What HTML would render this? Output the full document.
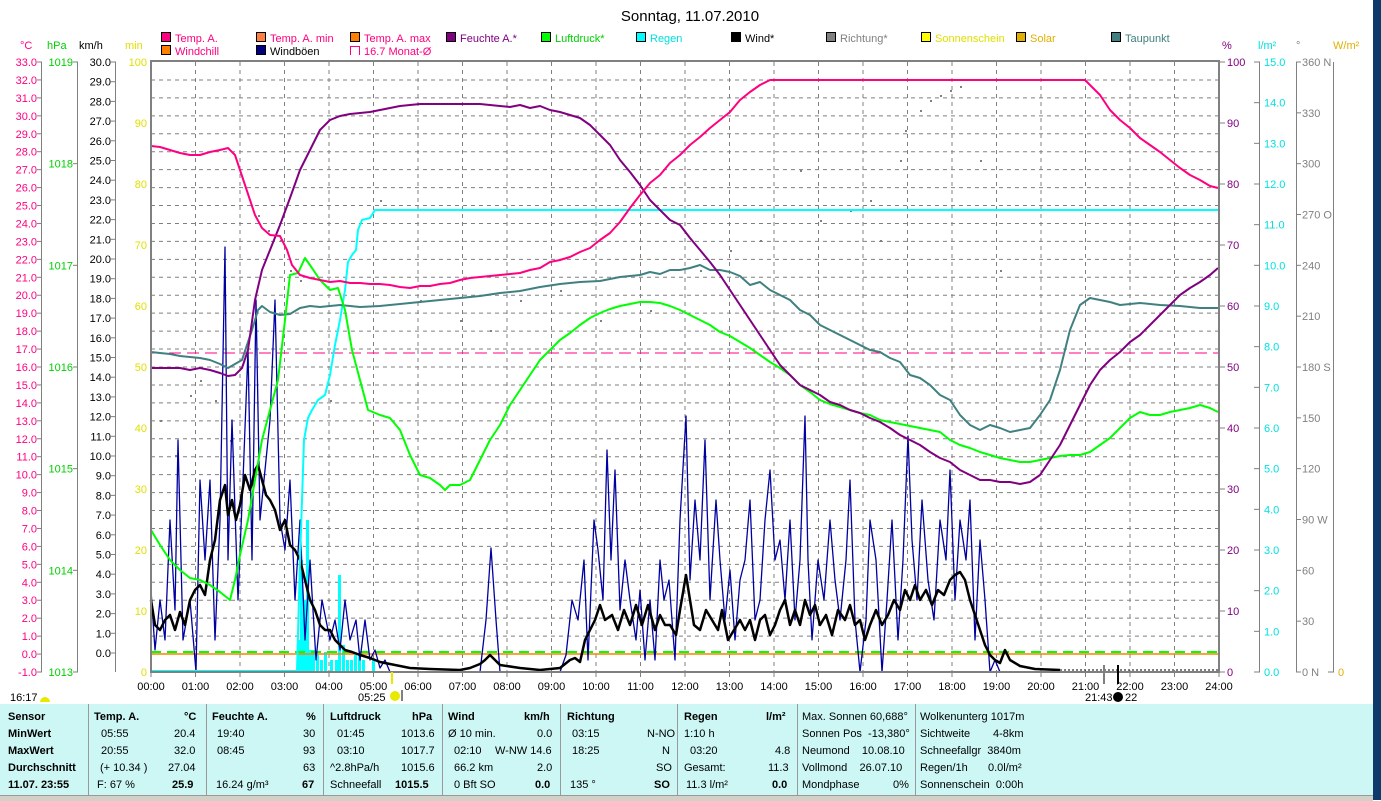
<!DOCTYPE html>
<html><head><meta charset="utf-8">
<style>
html,body{margin:0;padding:0;background:#fff;width:1381px;height:800px;overflow:hidden;font-family:"Liberation Sans",sans-serif}
svg text{font-family:"Liberation Sans",sans-serif;font-size:11px}
#tbl{position:absolute;left:0;top:704px;width:1373px;height:91px;background:#ccf7f5;font-size:11px;color:#000}
#tbl div{position:absolute;white-space:nowrap}
.sep{width:1px;background:#999;top:0;height:91px}
.b{font-weight:bold}
</style></head><body>
<svg id="s" width="1381" height="800" style="position:absolute;left:0;top:0">
<rect x="1373" y="0" width="8" height="800" fill="#0d3a6a"/>
<text x="690" y="21" text-anchor="middle" style="font-size:15px">Sonntag, 11.07.2010</text>
<!-- legend -->
<g stroke="#000" stroke-width="1">
<rect x="161.5" y="32.5" width="9" height="9" fill="#ff0080"/>
<rect x="256.5" y="32.5" width="9" height="9" fill="#ff8040"/>
<rect x="350.5" y="32.5" width="9" height="9" fill="#ff8000"/>
<rect x="446.5" y="32.5" width="9" height="9" fill="#800080"/>
<rect x="541.5" y="32.5" width="9" height="9" fill="#00ff00"/>
<rect x="636.5" y="32.5" width="9" height="9" fill="#00ffff"/>
<rect x="731.5" y="32.5" width="9" height="9" fill="#000"/>
<rect x="826.5" y="32.5" width="9" height="9" fill="#808080"/>
<rect x="921.5" y="32.5" width="9" height="9" fill="#ffff00"/>
<rect x="1016.5" y="32.5" width="9" height="9" fill="#e0b000"/>
<rect x="1111.5" y="32.5" width="9" height="9" fill="#408080"/>
<rect x="161.5" y="45.5" width="9" height="9" fill="#ff8000"/>
<rect x="256.5" y="45.5" width="9" height="9" fill="#000080"/>
</g>
<path d="M350.5 55V46.5H359.5V55" fill="none" stroke="#ff0080"/>
<g>
<text x="175" y="42" fill="#ff0080">Temp. A.</text>
<text x="270" y="42" fill="#ff0080">Temp. A. min</text>
<text x="364" y="42" fill="#ff0080">Temp. A. max</text>
<text x="460" y="42" fill="#800080">Feuchte A.*</text>
<text x="555" y="42" fill="#00d000">Luftdruck*</text>
<text x="650" y="42" fill="#00e0e0">Regen</text>
<text x="745" y="42" fill="#000">Wind*</text>
<text x="840" y="42" fill="#808080">Richtung*</text>
<text x="935" y="42" fill="#e0e000">Sonnenschein</text>
<text x="1030" y="42" fill="#e0b000">Solar</text>
<text x="1125" y="42" fill="#408080">Taupunkt</text>
<text x="175" y="55" fill="#ff0080">Windchill</text>
<text x="270" y="55" fill="#000">Windböen</text>
<text x="364" y="55" fill="#ff0080">16.7 Monat-Ø</text>
</g>
<text x="20" y="49" fill="#ff0080">°C</text>
<text x="47" y="49" fill="#00d000">hPa</text>
<text x="79" y="49" fill="#000">km/h</text>
<text x="125" y="49" fill="#e0e000">min</text>
<text x="1222" y="49" fill="#800080">%</text>
<text x="1258" y="49" fill="#00e0e0">l/m²</text>
<text x="1296" y="49" fill="#808080">°</text>
<text x="1333" y="49" fill="#e0b000">W/m²</text>
<g id="axes"></g>
<g id="grid"></g>
<g id="data"></g>
<rect x="151" y="61" width="1068" height="611" fill="none" stroke="#808080" stroke-width="2"/>
<g id="xl"></g>
<text x="10" y="701">16:17</text>
<path d="M40 702a5 5 0 0 1 10 0z" fill="#e8e800"/>
<text x="358" y="701">05:25</text>
<circle cx="395" cy="696" r="5" fill="#e8e800"/>
<line x1="402" y1="690" x2="402" y2="701" stroke="#000"/>
<line x1="392" y1="672" x2="392" y2="684" stroke="#e8e800" stroke-width="2"/>
<line x1="1104" y1="665" x2="1104" y2="684" stroke="#808080" stroke-width="2"/>
<line x1="1118" y1="665" x2="1118" y2="684" stroke="#000" stroke-width="2"/>
<text x="1085" y="701">21:43</text>
<circle cx="1118" cy="697" r="5" fill="#000"/>
<text x="1125" y="701">22</text>
</svg>
<div id="tbl">
<div class="sep" style="left:88px"></div><div class="sep" style="left:206px"></div><div class="sep" style="left:323px"></div><div class="sep" style="left:442px"></div><div class="sep" style="left:560px"></div><div class="sep" style="left:677px"></div><div class="sep" style="left:797px"></div><div class="sep" style="left:915px"></div>
<div class="b" style="left:8px;top:7px">Sensor</div><div class="b" style="left:8px;top:24px">MinWert</div><div class="b" style="left:8px;top:41px">MaxWert</div><div class="b" style="left:8px;top:58px">Durchschnitt</div><div class="b" style="left:8px;top:75px">11.07. 23:55</div>
<div class="b" style="left:94px;top:7px">Temp. A.</div><div class="b" style="left:184px;top:7px">°C</div>
<div style="left:101px;top:24px">05:55</div><div style="left:174px;top:24px">20.4</div>
<div style="left:101px;top:41px">20:55</div><div style="left:174px;top:41px">32.0</div>
<div style="left:100px;top:58px">(+ 10.34 )</div><div style="left:168px;top:58px">27.04</div>
<div style="left:97px;top:75px">F: 67 %</div><div class="b" style="left:172px;top:75px">25.9</div>
<div class="b" style="left:212px;top:7px">Feuchte A.</div><div class="b" style="left:306px;top:7px">%</div>
<div style="left:217px;top:24px">19:40</div><div style="left:303px;top:24px">30</div>
<div style="left:217px;top:41px">08:45</div><div style="left:303px;top:41px">93</div>
<div style="left:303px;top:58px">63</div>
<div style="left:216px;top:75px">16.24 g/m³</div><div class="b" style="left:302px;top:75px">67</div>
<div class="b" style="left:330px;top:7px">Luftdruck</div><div class="b" style="left:412px;top:7px">hPa</div>
<div style="left:337px;top:24px">01:45</div><div style="left:401px;top:24px">1013.6</div>
<div style="left:337px;top:41px">03:10</div><div style="left:401px;top:41px">1017.7</div>
<div style="left:330px;top:58px">^2.8hPa/h</div><div style="left:401px;top:58px">1015.6</div>
<div style="left:330px;top:75px">Schneefall</div><div class="b" style="left:395px;top:75px">1015.5</div>
<div class="b" style="left:448px;top:7px">Wind</div><div class="b" style="left:524px;top:7px">km/h</div>
<div style="left:448px;top:24px">Ø 10 min.</div><div style="left:537px;top:24px">0.0</div>
<div style="left:454px;top:41px">02:10</div><div style="left:495px;top:41px">W-NW 14.6</div>
<div style="left:454px;top:58px">66.2 km</div><div style="left:537px;top:58px">2.0</div>
<div style="left:454px;top:75px">0 Bft SO</div><div class="b" style="left:535px;top:75px">0.0</div>
<div class="b" style="left:567px;top:7px">Richtung</div>
<div style="left:572px;top:24px">03:15</div><div style="left:647px;top:24px">N-NO</div>
<div style="left:572px;top:41px">18:25</div><div style="left:662px;top:41px">N</div>
<div style="left:656px;top:58px">SO</div>
<div style="left:570px;top:75px">135 °</div><div class="b" style="left:654px;top:75px">SO</div>
<div class="b" style="left:684px;top:7px">Regen</div><div class="b" style="left:766px;top:7px">l/m²</div>
<div style="left:684px;top:24px">1:10 h</div>
<div style="left:690px;top:41px">03:20</div><div style="left:775px;top:41px">4.8</div>
<div style="left:684px;top:58px">Gesamt:</div><div style="left:768px;top:58px">11.3</div>
<div style="left:686px;top:75px">11.3 l/m²</div><div class="b" style="left:772px;top:75px">0.0</div>
<div style="left:802px;top:7px">Max. Sonnen 60,688°</div>
<div style="left:802px;top:24px">Sonnen Pos&nbsp; -13,380°</div>
<div style="left:802px;top:41px">Neumond&nbsp;&nbsp;&nbsp; 10.08.10</div>
<div style="left:802px;top:58px">Vollmond&nbsp;&nbsp;&nbsp; 26.07.10</div>
<div style="left:802px;top:75px">Mondphase</div><div style="left:893px;top:75px">0%</div>
<div style="left:920px;top:7px">Wolkenunterg 1017m</div>
<div style="left:920px;top:24px">Sichtweite</div><div style="left:993px;top:24px">4-8km</div>
<div style="left:920px;top:41px">Schneefallgr&nbsp; 3840m</div>
<div style="left:920px;top:58px">Regen/1h</div><div style="left:988px;top:58px">0.0l/m²</div>
<div style="left:920px;top:75px">Sonnenschein&nbsp; 0:00h</div>
</div>
<div style="position:absolute;left:0;top:795px;width:1373px;height:5px;background:#d4d0c8;border-top:1px solid #999"></div>
<script>
var NS="http://www.w3.org/2000/svg";
function el(p,t,a,txt){var e=document.createElementNS(NS,t);for(var k in a)e.setAttribute(k,a[k]);if(txt!==undefined)e.textContent=txt;document.getElementById(p).appendChild(e);return e;}
var T=62,B=672,L=151,R=1219,H=(R-L)/24;
// grid
for(var i=1;i<34;i++){var y=T+i*(B-T)/34;el("grid","line",{x1:L,x2:R,y1:y,y2:y,stroke:"#808080","stroke-dasharray":"4 4"});}
for(var i=1;i<24;i++){var x=L+i*H;el("grid","line",{x1:x,x2:x,y1:T,y2:B,stroke:"#808080","stroke-dasharray":"4 4"});}
// left axes
function ax(x,lx,vals,col,anchor){el("axes","line",{x1:x+.5,x2:x+.5,y1:T,y2:B,stroke:"#808080"});}
el("axes","line",{x1:41.5,x2:41.5,y1:T,y2:B,stroke:"#808080"});
el("axes","line",{x1:77.5,x2:77.5,y1:T,y2:B,stroke:"#808080"});
el("axes","line",{x1:115.5,x2:115.5,y1:T,y2:B,stroke:"#808080"});
for(var i=0;i<=34;i++){var y=T+i*(B-T)/34;var v=(33-i).toFixed(1);
 el("axes","text",{x:37,y:y+4,"text-anchor":"end",fill:"#ff0080"},v);el("axes","line",{x1:37,x2:42,y1:y,y2:y,stroke:"#808080"});}
for(var i=0;i<=6;i++){var y=T+i*(B-T)/6;el("axes","text",{x:73,y:y+4,"text-anchor":"end",fill:"#00d000"},1019-i);el("axes","line",{x1:73,x2:78,y1:y,y2:y,stroke:"#808080"});}
for(var i=0;i<=30;i++){var y=T+i*(B-T-19)/30;if(i==30)y=B-19;el("axes","text",{x:111,y:y+4,"text-anchor":"end",fill:"#000"},(30-i).toFixed(1));el("axes","line",{x1:111,x2:116,y1:y,y2:y,stroke:"#808080"});}
for(var i=0;i<=10;i++){var y=T+i*(B-T)/10;el("axes","text",{x:147,y:y+4,"text-anchor":"end",fill:i==0||i==10?"#e0e000":"#e0e000"},(100-i*10));}
// right axes
el("axes","line",{x1:1259.5,x2:1259.5,y1:T,y2:B,stroke:"#808080"});
el("axes","line",{x1:1296.5,x2:1296.5,y1:T,y2:B,stroke:"#808080"});
el("axes","line",{x1:1333.5,x2:1333.5,y1:T,y2:B,stroke:"#808080"});
for(var i=0;i<=10;i++){var y=T+i*(B-T)/10;el("axes","line",{x1:1219,x2:1225,y1:y,y2:y,stroke:"#808080"});el("axes","text",{x:1227,y:y+4,fill:"#800080"},100-i*10);}
for(var i=0;i<=15;i++){var y=T+i*(B-T)/15;el("axes","line",{x1:1254,x2:1260,y1:y,y2:y,stroke:"#808080"});el("axes","text",{x:1264,y:y+4,fill:"#00e0e0"},(15-i).toFixed(1));}
var dn={0:" N",3:" O",6:" S",9:" W",12:" N"};
for(var i=0;i<=12;i++){var y=T+i*(B-T)/12;el("axes","line",{x1:1296,x2:1301,y1:y,y2:y,stroke:"#808080"});el("axes","text",{x:1302,y:y+4,fill:"#808080"},(360-i*30)+(dn[i]||""));}
el("axes","line",{x1:1328,x2:1334,y1:B,y2:B,stroke:"#808080"});el("axes","text",{x:1338,y:B+4,fill:"#e0b000"},"0");
// x labels
for(var i=0;i<=24;i++){var x=L+i*H;el("xl","line",{x1:x,x2:x,y1:B,y2:B+5,stroke:"#808080"});el("xl","text",{x:x,y:690,"text-anchor":"middle"},(i<10?"0":"")+i+":00");}
// data
function pl(pts,col,w,extra){var a={points:pts,fill:"none",stroke:col,"stroke-width":w,"stroke-linejoin":"round"};for(var k in extra)a[k]=extra[k];return el("data","polyline",a);}
// scatter dots
var dots=[[160,420],[175,455],[190,395],[200,380],[215,400],[230,440],[258,215],[268,230],[280,240],[290,270],[300,280],[330,400],[380,200],[420,300],[460,320],[490,330],[520,300],[560,290],[600,320],[650,310],[700,270],[730,250],[760,240],[800,170],[820,220],[850,210],[880,240],[900,160],[905,130],[920,110],[930,100],[940,95],[950,90],[960,86],[980,160],[1000,270],[870,200]];
dots.forEach(function(d){el("data","rect",{x:d[0],y:d[1],width:2,height:2,fill:"#808080"});});
// rain bars
var rb=[[298,640],[300,560],[303,600],[306,520],[309,650],[312,650],[316,655],[320,660],[324,652],[330,660],[335,660],[338,575],[342,645],[346,660],[350,660],[354,655],[358,655],[362,660],[372,660]];
rb.forEach(function(r){el("data","rect",{x:r[0],y:r[1],width:3,height:B-r[1],fill:"#00ffff"});});
// zero lines
pl("151,652 1219,652","#00ff00",2,{"stroke-dasharray":"10 6"});
pl("151,654 1219,654","#ff8000",1.5);
pl("151,353 1219,353","#ff0080",1,{"stroke-dasharray":"12 6"});
// gusts
pl("151,590 155,650 160,600 165,640 170,520 175,610 178,440 183,640 190,600 196,672 200,480 205,560 210,480 215,640 220,520 225,247 228,560 232,420 238,600 243,480 248,350 252,560 256,300 260,520 265,470 270,420 275,300 280,520 285,550 290,480 295,600 300,520 305,640 310,560 316,660 322,600 330,640 335,620 340,650 345,600 350,640 356,620 360,660 365,620 370,660 375,650 380,668 385,660 390,672 480,672 486,620 491,548 496,620 500,672 560,672 566,655 572,600 578,620 584,560 588,660 594,520 598,550 603,600 607,450 611,560 615,470 620,610 625,560 630,600 636,640 640,590 645,660 650,600 655,660 660,560 664,600 669,580 675,660 680,520 686,416 690,580 695,500 700,560 705,440 710,600 716,500 720,560 725,620 730,570 735,640 740,580 745,560 750,500 755,620 760,600 765,520 770,470 775,560 780,540 785,600 790,520 795,620 800,560 805,416 808,560 812,640 818,560 824,600 830,520 835,580 840,620 846,560 850,480 855,620 860,672 866,620 870,520 876,560 882,672 887,600 892,520 898,640 903,560 908,436 912,540 917,600 922,500 928,580 934,620 940,520 946,560 950,470 955,600 960,520 966,560 970,500 975,640 980,540 985,600 990,672 995,660 1000,672","#0000a0",1.3);
// wind
pl("151,600 155,625 160,630 165,620 170,615 175,630 180,612 185,625 190,600 195,590 200,585 205,595 210,560 215,540 220,500 225,485 228,515 232,500 236,520 240,505 245,475 250,490 255,470 258,465 262,480 266,495 270,500 275,510 280,530 285,520 290,545 295,550 300,560 305,580 310,600 315,610 320,625 325,630 330,630 335,640 340,645 345,650 352,652 360,655 370,658 380,662 395,665 410,668 430,669 460,670 470,668 480,664 485,660 490,655 495,660 500,665 520,668 540,670 560,668 570,660 575,658 580,662 585,640 590,630 595,620 600,605 605,620 612,615 618,630 624,610 630,625 636,605 642,625 648,605 655,630 660,615 665,625 670,625 676,635 680,610 686,575 690,600 694,625 700,630 706,610 712,620 718,630 722,610 728,640 734,630 740,620 745,630 750,620 755,640 760,620 765,615 770,635 775,625 780,610 785,600 790,625 795,610 800,625 805,600 810,615 815,605 820,625 826,615 832,635 838,610 845,620 850,605 855,625 860,620 865,640 870,625 876,610 882,625 888,615 894,600 900,610 905,590 910,600 915,585 920,600 926,590 932,605 938,590 944,595 950,580 955,575 960,572 965,580 970,600 975,615 980,630 985,645 990,655 995,660 1000,663 1005,650 1010,660 1020,666 1035,669 1060,670","#000",2.5);
pl("1060,670 1218,670","#000",1,{"stroke-dasharray":"2 2"});
// rain cumulative
pl("151,671 297,671 300,560 304,440 308,418 312,410 318,400 325,395 330,375 335,345 340,320 345,290 348,262 352,255 356,250 358,230 362,220 370,218 375,210 1218,210","#00ffff",2);
// taupunkt
pl("151,352 160,353 170,354 180,356 190,357 200,358 210,360 220,364 228,368 235,364 242,360 246,348 252,330 258,310 262,306 270,312 280,315 290,314 300,308 310,306 320,307 340,305 360,307 380,306 400,304 420,302 440,300 460,298 480,296 500,293 520,291 540,287 560,284 580,282 600,281 620,277 640,275 650,272 660,274 670,270 680,270 690,268 700,265 710,270 720,270 730,272 740,276 750,285 760,282 770,290 780,295 790,300 800,310 810,315 820,325 830,330 840,335 850,340 860,345 870,350 880,352 890,358 900,362 910,375 920,378 930,385 940,395 950,400 960,415 970,425 980,430 990,425 1000,428 1010,432 1020,430 1030,428 1040,415 1050,400 1060,370 1070,330 1080,305 1090,298 1100,300 1110,302 1120,305 1140,303 1160,305 1180,306 1200,308 1218,308","#408080",2);
// luftdruck
pl("151,530 160,545 170,560 180,570 190,578 200,580 210,585 220,592 230,600 235,580 240,555 248,520 255,480 262,440 270,410 278,380 285,320 290,275 298,273 305,258 312,268 320,280 330,290 338,288 345,310 352,350 360,380 368,410 380,415 390,418 400,430 410,455 420,475 430,478 440,485 445,490 450,485 460,485 470,480 480,460 490,440 500,425 510,405 520,390 530,375 540,360 550,350 560,340 570,333 580,325 590,318 600,313 610,309 620,306 630,304 640,302 650,302 660,303 670,306 680,310 690,315 700,320 710,325 720,332 730,336 740,342 750,348 760,355 770,362 780,368 790,375 800,385 810,392 820,400 830,404 840,407 850,410 860,413 870,415 880,420 890,422 900,424 910,426 920,428 930,430 940,432 950,440 960,445 970,448 980,452 990,455 1000,458 1010,460 1020,462 1030,462 1040,460 1050,458 1060,456 1070,455 1080,455 1090,452 1100,445 1110,438 1120,428 1130,418 1140,412 1150,415 1160,415 1170,412 1180,410 1190,408 1200,405 1210,408 1218,412","#00ff00",2);
// feuchte
pl("151,368 160,368 170,368 180,368 190,370 200,368 210,370 220,373 228,376 235,375 242,368 248,350 255,300 262,270 270,250 280,225 290,198 300,170 310,150 320,130 330,120 340,116 350,114 360,113 370,112 380,110 390,108 400,106 410,105 420,104 440,104 460,104 480,104 500,106 510,107 520,105 530,108 540,106 550,110 560,112 570,115 580,118 590,125 600,135 610,145 620,160 630,172 640,185 650,200 660,210 670,220 680,225 690,238 700,250 710,262 720,275 730,290 740,305 750,320 760,335 770,350 780,365 790,375 800,385 810,390 820,395 830,402 840,405 850,410 860,413 870,418 880,422 890,428 900,435 910,440 920,445 930,452 940,458 950,462 960,470 970,475 980,480 990,480 1000,482 1010,482 1020,484 1030,482 1040,475 1050,460 1060,445 1070,425 1080,405 1090,385 1100,370 1110,360 1120,352 1130,342 1140,335 1150,325 1160,315 1170,305 1180,295 1190,288 1200,282 1210,275 1218,268","#800080",2);
// temp
pl("151,146 160,147 170,150 180,153 190,155 200,155 210,152 220,150 228,148 235,155 240,170 245,185 250,200 255,215 262,228 270,235 280,236 287,250 292,265 300,275 310,278 320,280 330,282 340,281 350,283 360,283 370,284 380,284 390,285 400,287 410,288 420,286 430,286 440,284 450,283 460,280 470,278 480,277 490,276 500,275 510,274 520,273 530,270 540,268 550,262 560,260 570,257 580,252 590,248 600,240 610,233 620,222 630,208 640,195 650,183 660,175 670,163 680,155 690,145 700,137 710,128 720,120 730,112 740,100 750,92 760,85 770,80 780,80 800,80 900,80 1000,80 1085,80 1090,85 1100,95 1110,110 1120,120 1130,128 1140,138 1150,145 1160,152 1170,160 1180,168 1190,175 1200,180 1210,186 1218,188","#ff0080",2);
</script>
</body></html>
